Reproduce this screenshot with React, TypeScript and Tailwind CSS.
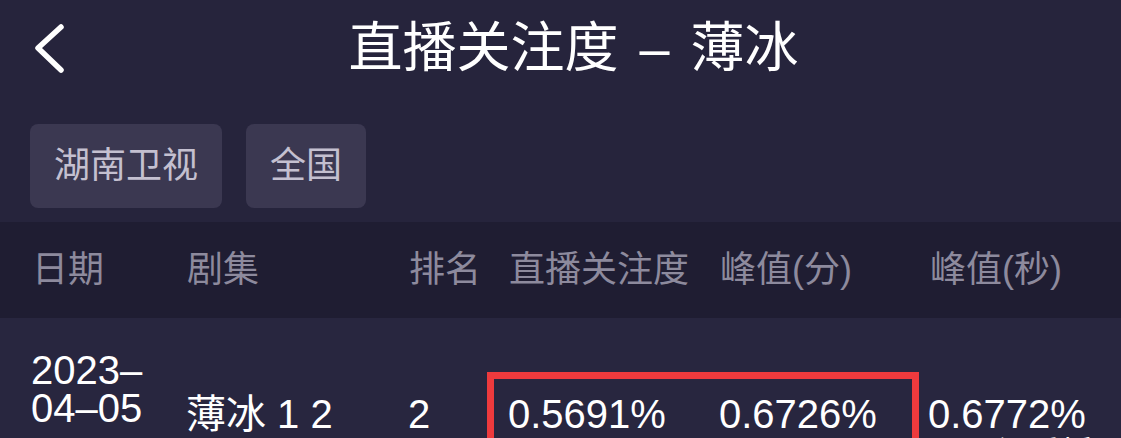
import * as React from "react";

const font = { fontFamily: '"Liberation Sans", "Noto Sans CJK SC", sans-serif' };

export default function App() {
  return (
    <div
      className="w-[1121px] h-[438px] overflow-hidden bg-[#26243c] text-white"
      style={font}
    >
      {/* top bar */}
      <div className="grid grid-cols-[1fr_auto_1fr] items-center h-[96px]">
        <div className="pl-[33px] flex items-center">
          <svg width="34" height="52" viewBox="0 0 34 52" fill="none">
            <path
              d="M28 5 L5 26 L28 48"
              stroke="#ffffff"
              strokeWidth="5.5"
              strokeLinecap="round"
              strokeLinejoin="round"
            />
          </svg>
        </div>
        <div className="pl-[26px] text-[54px] leading-none whitespace-nowrap">
          直播关注度 <span className="mx-[6px]">–</span> 薄冰
        </div>
        <div />
      </div>

      {/* tabs */}
      <div className="flex gap-[24px] pl-[30px] pt-[28px] h-[126px]">
        <div className="h-[84px] px-[24px] rounded-[8px] bg-[#3b3851] text-[#c4c0d0] text-[36px] flex items-center">
          湖南卫视
        </div>
        <div className="h-[84px] px-[24px] rounded-[8px] bg-[#3b3851] text-[#c4c0d0] text-[36px] flex items-center">
          全国
        </div>
      </div>

      {/* table header */}
      <div className="grid grid-cols-[155px_222px_100px_211px_210px_1fr] items-center h-[96px] pl-[32px] bg-[#1f1d32] text-[#8d8a9d] text-[36px] whitespace-nowrap">
        <div>日期</div>
        <div>剧集</div>
        <div>排名</div>
        <div>直播关注度</div>
        <div>峰值(分)</div>
        <div>峰值(秒)</div>
      </div>

      {/* table row */}
      <div className="bg-[#28263f] h-[200px]">
        <div className="grid grid-cols-[155px_222px_79px_432px_1fr] pl-[31px] text-[40px] leading-[38px] whitespace-nowrap">
          <div className="pt-[33px]">
            2023–
            <br />
            04–05
          </div>
          <div className="pt-[77px]">薄冰 1 2</div>
          <div className="pt-[77px]">2</div>
          <div className="mt-[54px] border-[7px] border-[#ee3a3d] h-[120px] grid grid-cols-[211px_1fr] pl-[14px] pt-[16px]">
            <div>0.5691%</div>
            <div>0.6726%</div>
          </div>
          <div className="pt-[77px] pl-[9px]">
            0.6772%
            <div className="text-[32px] leading-[36px] pt-[2px]">“2 早间重播”</div>
          </div>
        </div>
      </div>
    </div>
  );
}
